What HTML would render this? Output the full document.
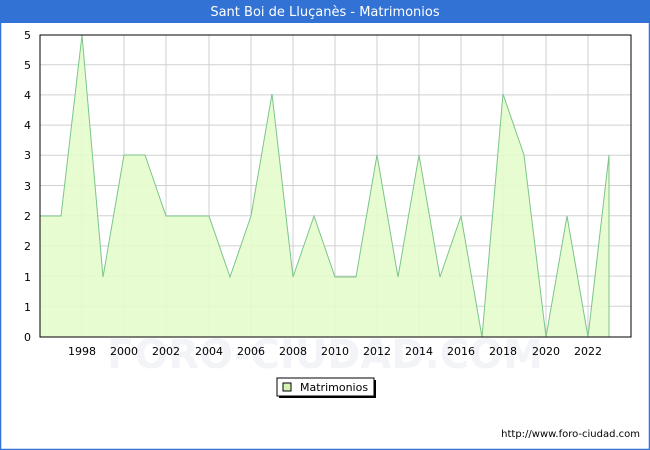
<!DOCTYPE html>
<html><head><meta charset="utf-8"><style>
html,body{margin:0;padding:0;background:#fff;}
body{width:650px;height:450px;overflow:hidden;position:relative;font-family:"DejaVu Sans","Liberation Sans",sans-serif;}
</style></head><body>
<svg width="650" height="450" xmlns="http://www.w3.org/2000/svg" style="position:absolute;left:0;top:0">
<rect x="0.5" y="0.5" width="649" height="449" fill="#fff" stroke="#3272d4" stroke-width="1.5"/>
<rect x="0" y="0" width="650" height="23" fill="#3272d4"/>
<text x="325" y="16" text-anchor="middle" fill="#fff" font-size="13" font-family="DejaVu Sans, sans-serif">Sant Boi de Lluçanès - Matrimonios</text>
<g stroke="#d0d0d0" stroke-width="1">
<line x1="40" y1="64.7" x2="631" y2="64.7"/><line x1="40" y1="94.9" x2="631" y2="94.9"/><line x1="40" y1="125.1" x2="631" y2="125.1"/><line x1="40" y1="155.3" x2="631" y2="155.3"/><line x1="40" y1="185.5" x2="631" y2="185.5"/><line x1="40" y1="215.7" x2="631" y2="215.7"/><line x1="40" y1="245.9" x2="631" y2="245.9"/><line x1="40" y1="276.1" x2="631" y2="276.1"/><line x1="40" y1="306.3" x2="631" y2="306.3"/>
<line x1="82" y1="35" x2="82" y2="337"/><line x1="124" y1="35" x2="124" y2="337"/><line x1="166" y1="35" x2="166" y2="337"/><line x1="209" y1="35" x2="209" y2="337"/><line x1="251" y1="35" x2="251" y2="337"/><line x1="293" y1="35" x2="293" y2="337"/><line x1="335" y1="35" x2="335" y2="337"/><line x1="377" y1="35" x2="377" y2="337"/><line x1="419" y1="35" x2="419" y2="337"/><line x1="461" y1="35" x2="461" y2="337"/><line x1="503" y1="35" x2="503" y2="337"/><line x1="546" y1="35" x2="546" y2="337"/><line x1="588" y1="35" x2="588" y2="337"/>
</g>
<polygon fill="#e4fccc" fill-opacity="0.9" stroke="#7cc48c" stroke-width="1" points="40,337 40,216 61,216 82,35 103,277 124,155 145,155 166,216 187,216 209,216 230,277 251,216 272,94 293,277 314,216 335,277 356,277 377,155 398,277 419,155 440,277 461,216 482,337 503,94 524,155 546,337 567,216 588,337 609,155 609,337"/>
<rect x="40" y="35" width="591" height="302" fill="none" stroke="#000" stroke-width="1"/>
<text x="325" y="368" text-anchor="middle" fill="#f2f4f8" font-size="40" font-weight="bold">FORO-CIUDAD.COM</text>
<g font-size="11" fill="#000" text-anchor="end">
<text x="31" y="39">5</text><text x="31" y="69">5</text><text x="31" y="99">4</text><text x="31" y="129">4</text><text x="31" y="159">3</text><text x="31" y="190">3</text><text x="31" y="220">2</text><text x="31" y="250">2</text><text x="31" y="281">1</text><text x="31" y="311">1</text><text x="31" y="341">0</text>
</g>
<g font-size="11" fill="#000" text-anchor="middle">
<text x="82" y="355">1998</text><text x="124" y="355">2000</text><text x="166" y="355">2002</text><text x="209" y="355">2004</text><text x="251" y="355">2006</text><text x="293" y="355">2008</text><text x="335" y="355">2010</text><text x="377" y="355">2012</text><text x="419" y="355">2014</text><text x="461" y="355">2016</text><text x="503" y="355">2018</text><text x="546" y="355">2020</text><text x="588" y="355">2022</text>
</g>
<rect x="279" y="380" width="97" height="18" fill="#000"/>
<rect x="277" y="378" width="97" height="18" fill="#fff" stroke="#000" stroke-width="1"/>
<rect x="283" y="383" width="8" height="8" fill="#d4f4b4" stroke="#000" stroke-width="1"/>
<text x="300" y="391" font-size="11" fill="#000">Matrimonios</text>
<text x="640" y="437" text-anchor="end" font-size="10" fill="#000">http://www.foro-ciudad.com</text>
</svg>
</body></html>
